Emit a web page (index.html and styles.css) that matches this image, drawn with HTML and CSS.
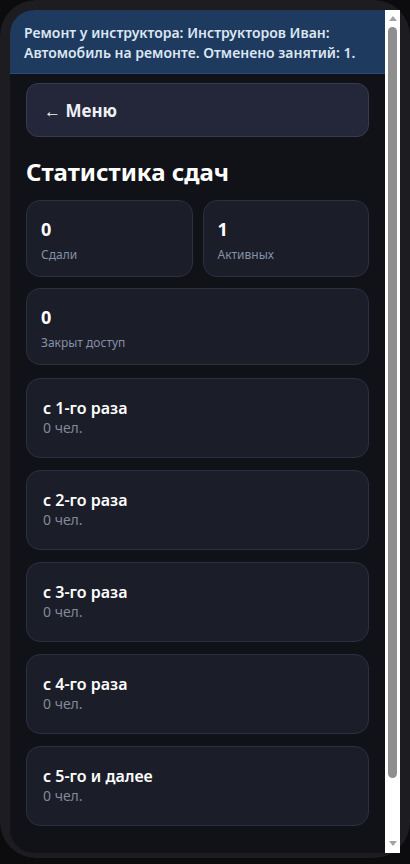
FILE: index.html
```html
<!DOCTYPE html>
<html lang="ru">
<head>
<meta charset="utf-8">
<link rel="stylesheet" href="styles.css">
</head>
<body>
<div class="device">
  <div class="screen">
    <div class="viewport">
      <div class="banner">Ремонт у инструктора: Инструкторов Иван: Автомобиль на ремонте. Отменено занятий: 1.</div>
      <div class="content">
        <button class="menu-btn">← Меню</button>
        <h1 class="title">Статистика сдач</h1>
        <div class="stats">
          <div class="stat"><div class="num">0</div><div class="lbl">Сдали</div></div>
          <div class="stat"><div class="num">1</div><div class="lbl">Активных</div></div>
          <div class="stat wide"><div class="num">0</div><div class="lbl">Закрыт доступ</div></div>
        </div>
        <div class="list">
          <div class="item"><div class="item-title">с 1-го раза</div><div class="item-sub">0 чел.</div></div>
          <div class="item"><div class="item-title">с 2-го раза</div><div class="item-sub">0 чел.</div></div>
          <div class="item"><div class="item-title">с 3-го раза</div><div class="item-sub">0 чел.</div></div>
          <div class="item"><div class="item-title">с 4-го раза</div><div class="item-sub">0 чел.</div></div>
          <div class="item"><div class="item-title">с 5-го и далее</div><div class="item-sub">0 чел.</div></div>
        </div>
      </div>
    </div>
    <div class="scrollbar" aria-hidden="true">
      <div class="arrow up"></div>
      <div class="thumb"></div>
      <div class="arrow down"></div>
    </div>
  </div>
</div>
</body>
</html>
```
FILE: styles.css
```css
html, body {
  margin: 0;
  padding: 0;
  background: #0c0c0e;
  font-family: "Noto Sans", "Open Sans", sans-serif;
}
.device {
  width: 410px;
  height: 858px;
  box-sizing: border-box;
  padding: 10px 10px 5px 10px;
  background: #1c1c21;
  border-radius: 36px;
}
.screen {
  height: 843px;
  display: flex;
  background: #111217;
  border-radius: 24px 0 0 24px;
  overflow: hidden;
}
.viewport {
  flex: 1;
  min-width: 0;
  overflow: hidden;
}
.scrollbar {
  width: 15px;
  flex: none;
  background: #ffffff;
  display: flex;
  flex-direction: column;
  align-items: center;
}
.arrow {
  width: 0;
  height: 0;
  border-left: 4.5px solid transparent;
  border-right: 4.5px solid transparent;
}
.arrow.up {
  margin-top: 6px;
  border-bottom: 5px solid #a3a3a3;
}
.arrow.down {
  margin-top: auto;
  margin-bottom: 7px;
  border-top: 5px solid #a3a3a3;
}
.thumb {
  width: 9px;
  height: 751px;
  margin-top: 6px;
  background: #8f8f8f;
  border-radius: 5px;
}
.banner {
  background: #1e3a5f;
  border-bottom: 1px solid #2c4c74;
  color: #dce6f2;
  font-size: 14px;
  font-weight: 600;
  line-height: 20px;
  padding: 13px 14px 10px 14px;
}
.content {
  padding: 9px 16px 96px 16px;
}
.menu-btn {
  display: block;
  width: 100%;
  height: 54px;
  box-sizing: border-box;
  background: #24273a;
  border: 1px solid #373b52;
  border-radius: 12px;
  color: #eef0f6;
  font-family: inherit;
  font-size: 17px;
  font-weight: 700;
  text-align: left;
  padding: 0 17px;
}
.title {
  margin: 20px 0 13px 0;
  color: #ffffff;
  font-size: 24px;
  font-weight: 700;
  line-height: 30px;
}
.stats {
  display: grid;
  grid-template-columns: 1fr 1fr;
  column-gap: 10px;
  row-gap: 11px;
}
.stat {
  background: #1b1d29;
  border: 1px solid #2c2f41;
  border-radius: 14px;
  padding: 16px 14px 12px 14px;
  height: 77px;
  box-sizing: border-box;
}
.stat.wide {
  grid-column: 1 / 3;
}
.num {
  color: #ffffff;
  font-size: 18px;
  font-weight: 700;
  line-height: 24px;
}
.lbl {
  color: #8690a6;
  font-size: 12px;
  line-height: 16px;
  margin-top: 6px;
}
.list {
  margin-top: 13px;
  display: flex;
  flex-direction: column;
  gap: 12px;
}
.item {
  background: #1b1d29;
  border: 1px solid #2c2f41;
  border-radius: 14px;
  height: 80px;
  box-sizing: border-box;
  padding: 19px 16px 0 16px;
}
.item-title {
  color: #ffffff;
  font-size: 16px;
  font-weight: 600;
  line-height: 20px;
}
.item-sub {
  color: #838997;
  font-size: 14px;
  line-height: 20px;
}
```
